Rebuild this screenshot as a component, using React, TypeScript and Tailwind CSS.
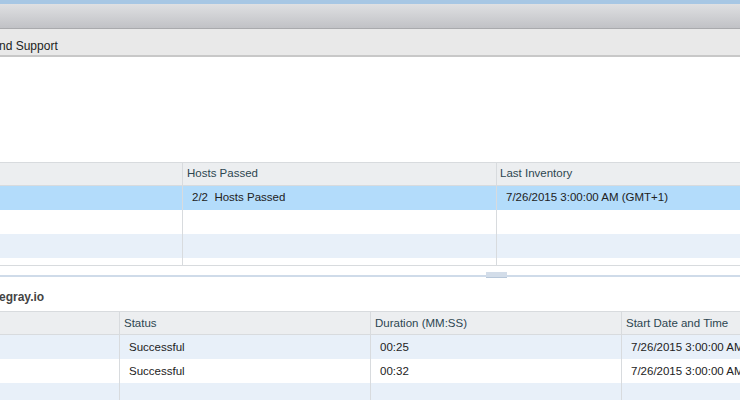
import React from "react";

const F = { fontFamily: '"Liberation Sans", Arial, sans-serif' };

export default function App() {
  return (
    <div className="w-[740px] h-[400px] overflow-hidden bg-white flex flex-col text-[11.5px] text-[#333]" style={F}>
      <div className="h-[4px] bg-[#a7c7e4] shrink-0" />
      <div className="h-[25px] shrink-0 bg-gradient-to-b from-[#dfe0e2] to-[#c1c2c6] border-b border-[#a9aaad]" />
      <div className="h-[28px] shrink-0 bg-[#e9e9e9] border-b-2 border-[#c8c8c8] flex items-center pt-[7px]">
        <span className="text-[12px] text-[#222] -ml-[1px]">nd Support</span>
      </div>
      <div className="h-[105px] shrink-0" />
      {/* upper table */}
      <div className="shrink-0 border-t border-b border-[#d8dbde] grid grid-cols-[183px_314px_1fr]">
        <div className="h-[23px] bg-[#eceef0] border-b border-[#d8dbde] border-r" />
        <div className="h-[23px] bg-[#eceef0] border-b border-[#d8dbde] border-r flex items-center pl-[4px] text-[#2d4650]">Hosts Passed</div>
        <div className="h-[23px] bg-[#eceef0] border-b border-[#d8dbde] flex items-center pl-[3px] text-[#2d4650]">Last Inventory</div>

        <div className="h-[24px] bg-[#b3dcfb] border-r border-[#d8dbde]" />
        <div className="h-[24px] bg-[#b3dcfb] border-r border-[#d8dbde] flex items-center pl-[9px] text-[#222]">2/2&nbsp;&nbsp;Hosts Passed</div>
        <div className="h-[24px] bg-[#b3dcfb] flex items-center pl-[9px] text-[#222]">7/26/2015 3:00:00 AM (GMT+1)</div>

        <div className="h-[24px] bg-white border-r border-[#d8dbde]" />
        <div className="h-[24px] bg-white border-r border-[#d8dbde]" />
        <div className="h-[24px] bg-white" />

        <div className="h-[24px] bg-[#e8f0f9] border-r border-[#d8dbde]" />
        <div className="h-[24px] bg-[#e8f0f9] border-r border-[#d8dbde]" />
        <div className="h-[24px] bg-[#e8f0f9]" />

        <div className="h-[7px] bg-white border-r border-[#d8dbde]" />
        <div className="h-[7px] bg-white border-r border-[#d8dbde]" />
        <div className="h-[7px] bg-white" />
      </div>
      {/* splitter */}
      <div className="h-[9px] shrink-0" />
      <div className="relative h-[2px] shrink-0 bg-[#cfdbe9]">
        <div className="absolute left-[486px] top-[-3px] w-[21px] h-[6px] bg-[#d3dde9] border-b border-[#b7c7d9]" />
      </div>
      <div className="h-[34px] shrink-0 flex items-center pt-[6px]">
        <span className="font-bold text-[12px] text-[#444] -ml-[1px]">egray.io</span>
      </div>
      {/* lower table */}
      <div className="shrink-0 border-t border-[#d8dbde] grid grid-cols-[120px_251px_251px_1fr]">
        <div className="h-[23px] bg-[#eceef0] border-b border-r border-[#d8dbde]" />
        <div className="h-[23px] bg-[#eceef0] border-b border-r border-[#d8dbde] flex items-center pl-[4px] pt-[1px] text-[#2d4650]">Status</div>
        <div className="h-[23px] bg-[#eceef0] border-b border-r border-[#d8dbde] flex items-center pl-[4px] pt-[1px] text-[#2d4650]">Duration (MM:SS)</div>
        <div className="h-[23px] bg-[#eceef0] border-b border-[#d8dbde] flex items-center pl-[4px] pt-[1px] text-[#2d4650]">Start Date and Time</div>

        <div className="h-[24px] bg-[#e8f0f9] border-r border-[#d8dbde]" />
        <div className="h-[24px] bg-[#e8f0f9] border-r border-[#d8dbde] flex items-center pl-[9px] pt-[1px] text-[#222]">Successful</div>
        <div className="h-[24px] bg-[#e8f0f9] border-r border-[#d8dbde] flex items-center pl-[9px] pt-[1px] text-[#222]">00:25</div>
        <div className="h-[24px] bg-[#e8f0f9] flex items-center pl-[9px] pt-[1px] text-[#222] whitespace-nowrap">7/26/2015 3:00:00 AM (GMT+1)</div>

        <div className="h-[24px] bg-white border-r border-[#d8dbde]" />
        <div className="h-[24px] bg-white border-r border-[#d8dbde] flex items-center pl-[9px] pt-[1px] text-[#222]">Successful</div>
        <div className="h-[24px] bg-white border-r border-[#d8dbde] flex items-center pl-[9px] pt-[1px] text-[#222]">00:32</div>
        <div className="h-[24px] bg-white flex items-center pl-[9px] pt-[1px] text-[#222] whitespace-nowrap">7/26/2015 3:00:00 AM (GMT+1)</div>

        <div className="h-[24px] bg-[#e8f0f9] border-r border-[#d8dbde]" />
        <div className="h-[24px] bg-[#e8f0f9] border-r border-[#d8dbde]" />
        <div className="h-[24px] bg-[#e8f0f9] border-r border-[#d8dbde]" />
        <div className="h-[24px] bg-[#e8f0f9]" />
      </div>
    </div>
  );
}
